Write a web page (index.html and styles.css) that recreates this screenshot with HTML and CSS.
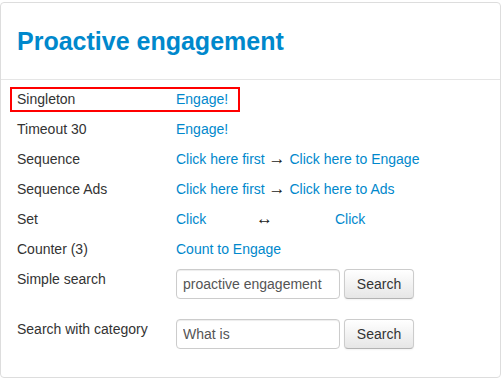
FILE: index.html
```html
<!DOCTYPE html>
<html lang="en">
<head>
  <meta charset="UTF-8">
  <meta name="viewport" content="width=device-width, initial-scale=1.0">
  <title>Proactive engagement</title>
  <link rel="stylesheet" href="styles.css">
</head>
<body>
  <div class="panel">
    <div class="panel-head">
      <h1>Proactive engagement</h1>
    </div>
    <div class="panel-body">
      <div class="row highlight">
        <span class="label">Singleton</span>
        <a href="#">Engage!</a>
      </div>
      <div class="row">
        <span class="label">Timeout 30</span>
        <a href="#">Engage!</a>
      </div>
      <div class="row">
        <span class="label">Sequence</span>
        <span><a href="#">Click here first</a> <span class="arrow">&rarr;</span> <a href="#">Click here to Engage</a></span>
      </div>
      <div class="row">
        <span class="label">Sequence Ads</span>
        <span><a href="#">Click here first</a> <span class="arrow">&rarr;</span> <a href="#">Click here to Ads</a></span>
      </div>
      <div class="row">
        <span class="label">Set</span>
        <span><a href="#" class="set-a">Click</a><span class="arrow set-arrow">&harr;</span><a href="#">Click</a></span>
      </div>
      <div class="row">
        <span class="label">Counter (3)</span>
        <a href="#">Count to Engage</a>
      </div>
      <div class="search-row">
        <span class="label">Simple search</span>
        <form class="search">
          <input type="text" value="proactive engagement">
          <button type="button">Search</button>
        </form>
      </div>
      <div class="search-row">
        <span class="label">Search with category</span>
        <form class="search">
          <input type="text" value="What is">
          <button type="button">Search</button>
        </form>
      </div>
    </div>
  </div>
</body>
</html>
```

FILE: styles.css
```css
body { margin: 0; font-family: "Liberation Sans", Arial, sans-serif; font-size: 14px; color: #333; background: #fff; }
a { color: #0088cc; text-decoration: none; }
.panel { margin-top: 2px; width: 501px; box-sizing: border-box; border: 1px solid #ddd; border-radius: 4px; padding-bottom: 28px; }
.panel-head { padding: 23px 16px; border-bottom: 1px solid #e5e5e5; }
.panel-head h1 { margin: 0; font-size: 25px; line-height: 30px; font-weight: bold; color: #0088cc; }
.panel-body { padding: 4px 0 0 16px; }
.row { display: flex; height: 30px; line-height: 30px; }
.label { width: 159px; flex-shrink: 0; }
.arrow { font-size: 17px; line-height: 20px; color: #222; }
.row.highlight { width: 230px; height: 25px; line-height: 21px; box-sizing: border-box; border: 2px solid #ff0000; margin: 3px 0 2px -7px; padding-left: 5px; }
.set-a { display: inline-block; width: 80px; }
.set-arrow { display: inline-block; width: 79px; }
.search-row { display: flex; margin-top: 5px; line-height: 20px; }
.search-row + .search-row { margin-top: 20px; }
.search { display: flex; margin: 0; }
.search input { width: 164px; height: 30px; box-sizing: border-box; padding: 4px 6px; border: 1px solid #ccc; border-radius: 4px; font-family: inherit; font-size: 14px; color: #555; box-shadow: inset 0 1px 1px rgba(0,0,0,0.075); }
.search button { margin-left: 4px; width: 70px; height: 30px; border: 1px solid #ccc; border-bottom-color: #b3b3b3; border-radius: 4px; background: linear-gradient(#ffffff, #e6e6e6); font-family: inherit; font-size: 14px; color: #333; box-shadow: inset 0 1px 0 rgba(255,255,255,0.2), 0 1px 2px rgba(0,0,0,0.05); }
```
